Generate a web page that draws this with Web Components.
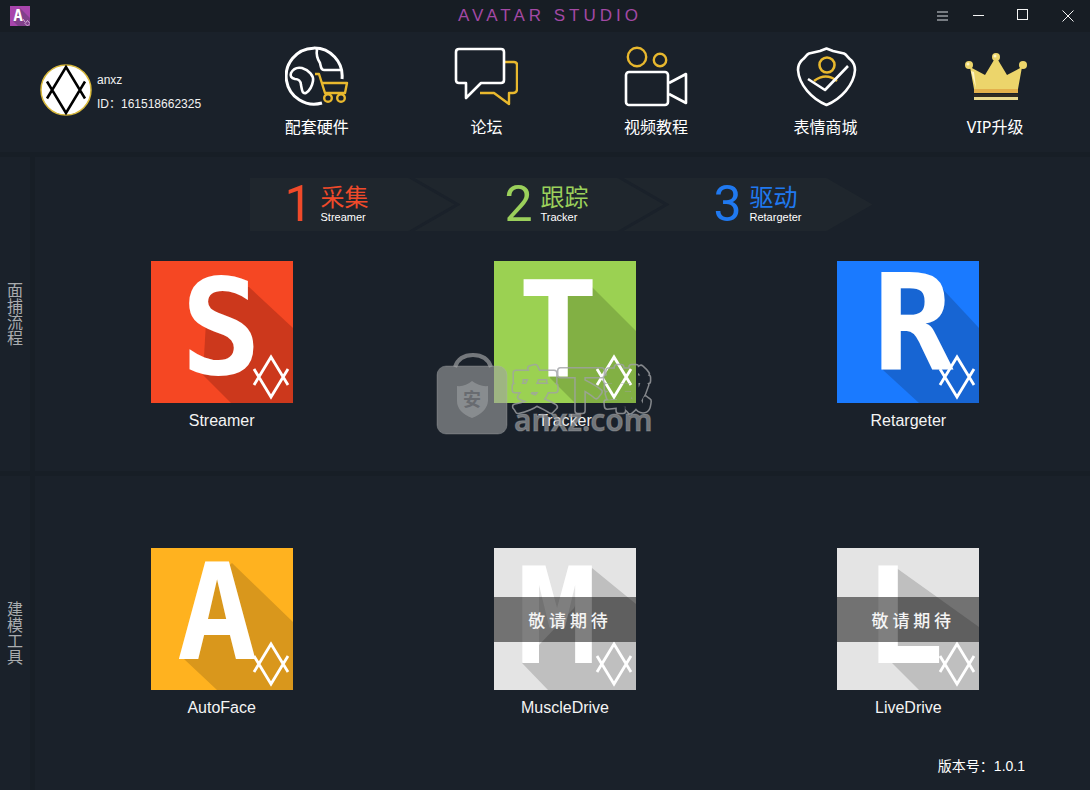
<!DOCTYPE html>
<html lang="zh-CN">
<head>
<meta charset="utf-8">
<meta name="viewport" content="width=device-width, initial-scale=1">
<title>AVATAR STUDIO</title>
<style>
  body {
    margin: 0;
    background: #171e26;
    color: #fff;
    font-family: "Liberation Sans", "Noto Sans CJK SC", sans-serif;
    font-size: 16px;
    line-height: 20px;
  }
</style>
</head>
<body>
<studio-app></studio-app>

<script>
  const define = (name, html, setup) => {
    const template = document.createElement('template');
    template.innerHTML = html;
    customElements.define(name, class extends HTMLElement {
      constructor() {
        super();
        this.attachShadow({ mode: 'open' }).append(template.content.cloneNode(true));
      }
      connectedCallback() {
        if (setup) setup(this, this.shadowRoot);
      }
    });
  };

  const EMBLEM = 'M-17 8 0-20 17 8M-17-8 0 20 17-8';

  /* ---------- title bar ---------- */
  define('title-bar', `
    <style>
      :host { display: grid; grid-template-columns: 1fr auto 1fr; align-items: center; height: 32px; padding-left: 10px; background: #171d24; }
      .logo { display: block; width: 20px; height: 20px; }
      h1 { margin: 0; font-size: 17px; font-weight: 400; line-height: 32px; letter-spacing: 4px; color: #a349a4; }
      .controls { display: flex; justify-content: flex-end; }
      button { display: grid; place-items: center; width: 45px; height: 32px; padding: 0; border: 0; background: none; color: #f4f4f4; }
      button.menu { width: 27px; color: #777c82; }
      button svg { display: block; width: 16px; height: 16px; fill: none; stroke: currentColor; }
    </style>
    <svg class="logo" viewBox="0 0 20 20" aria-hidden="true">
      <rect width="20" height="20" fill="#a845ac"/>
      <path d="M10 2 20 12V20H8L3 15Z" fill="#81408b"/>
      <text x="8" y="15" text-anchor="middle" font-family="DejaVu Sans Mono, monospace" font-weight="700" font-size="16" fill="#fff">A</text>
      <path d="M17.500 14.500 20 17.500 17.500 20 15 17.500ZM13 13l2 3" fill="none" stroke="#e6cce8" stroke-width=".8"/>
    </svg>
    <h1>AVATAR STUDIO</h1>
    <div class="controls">
      <button class="menu" aria-label="菜单"><svg viewBox="0 0 16 16"><path d="M3 4h11M3 8h11M3 12h11" stroke-width="2"/></svg></button>
      <button aria-label="最小化"><svg viewBox="0 0 16 16"><path d="M3 7.500h11"/></svg></button>
      <button aria-label="最大化"><svg viewBox="0 0 16 16"><rect x="2.500" y="1.500" width="10" height="10"/></svg></button>
      <button aria-label="关闭"><svg viewBox="0 0 16 16"><path d="M2.500 2.500l11 11M13.500 2.500l-11 11"/></svg></button>
    </div>
  `);

  /* ---------- user card ---------- */
  define('user-card', `
    <style>
      :host { display: flex; align-items: center; gap: 5px; font-size: 12px; line-height: 24px; color: #f2f2f2; }
      svg { display: block; width: 52px; height: 52px; flex: none; }
      .lines { padding-top: 4px; }
    </style>
    <svg viewBox="-26 -26 52 52" role="img" aria-label="头像">
      <circle r="25" fill="#fff" stroke="#d9b93c" stroke-width="1.500"/>
      <path d="M-19 8.500 0-23 19 8.500M-19-8.500 0 23 19-8.500" fill="none" stroke="#000" stroke-width="2.500"/>
    </svg>
    <div class="lines"><div><slot name="name"></slot></div><div><slot name="id"></slot></div></div>
  `);

  /* ---------- navigation entry ---------- */
  const ICONS = {
    hardware: `
      <path d="M57 34A28 28 0 1 0 37 58"/>
      <path stroke-width="2.600" d="M32 4C31 10 33 15 35 18 36 22 36 25 39 25H56"/>
      <path stroke-width="2.600" d="M6 28C8 24 12 22 17 23 24 25 29 31 28 36 27 42 24 46 21 48 17 49 17 45 16 40 16 36 13 34 10 34 6 33 5 31 6 28Z"/>
      <g stroke="#e8b82e" stroke-width="2.400"><path d="M30 29H34L40 48H60L62 38H37"/><circle cx="43" cy="53" r="3.800"/><circle cx="56" cy="53" r="3.800"/></g>`,
    forum: `
      <path stroke="#e8b82e" stroke-width="2.400" d="M51 17H60Q63 17 63 20V44Q63 48 59 48H55V59L40 48H26"/>
      <path stroke-width="2.600" d="M5 4H47Q50 4 50 7V35Q50 38 47 38H27L12 53V38H5Q2 38 2 35V7Q2 4 5 4Z"/>`,
    video: `
      <g stroke="#e8b82e" stroke-width="2.400"><circle cx="13" cy="12" r="9.200"/><circle cx="36" cy="15" r="6.200"/></g>
      <rect stroke-width="2.600" x="2" y="27" width="42" height="33" rx="3"/>
      <path stroke-width="2.600" d="M45 38 62 29V58L45 49"/>`,
    store: `
      <path stroke-width="2.600" d="M32.500 3.500 26 6 15 8.500C12 10 11 13 8 15 5 18 4 21 4 25 5 40 18 54 32.500 60 47 54 60 40 61 25 61 21 60 18 57 15 54 13 53 10 50 8.500L39 6Z"/>
      <g stroke="#e8b82e" stroke-width="2.600"><circle cx="33" cy="20" r="7.500"/><path d="M20 36Q32 27 43 36"/></g>
      <path stroke-width="2.600" d="M14 34 31 45 54 21"/>`,
    vip: `
      <g fill="#ecd56b" stroke="none">
        <circle cx="6" cy="20" r="4"/><circle cx="33" cy="12" r="4"/><circle cx="60" cy="20" r="4"/>
        <path d="M7 22 22 30 31 15H35L44 30 59 22 55 44H11Z"/>
        <path d="M11 44H55V48H11Z" fill="#e3b04c"/><path d="M11 49H55V52H11Z" fill="#302a22"/>
        <path d="M11 52H55V55H11Z" fill="#ead98f"/>
        <path d="M8 26 13 43 11 27Z" fill="#fff5c4"/><circle cx="5" cy="19" r="1.500" fill="#fff5c4"/><circle cx="32" cy="11" r="1.500" fill="#fff5c4"/>
      </g>`
  };
  define('nav-entry', `
    <style>
      :host { display: block; }
      a { display: flex; flex-direction: column; align-items: center; gap: 8px; color: #fff; text-decoration: none; font-family: "Noto Sans", "Noto Sans CJK SC", sans-serif; white-space: nowrap; }
      svg { display: block; width: 64px; height: 64px; fill: none; stroke: #fff; stroke-width: 3; stroke-linejoin: round; }
    </style>
    <a href="#"><svg viewBox="0 0 64 64" aria-hidden="true"></svg><span><slot></slot></span></a>
  `, (host, root) => { root.querySelector('svg').innerHTML = ICONS[host.getAttribute('icon')]; });

  /* ---------- process step ---------- */
  define('flow-step', `
    <style>
      :host { display: flex; align-items: center; gap: 10px; box-sizing: border-box; height: 53px; width: 249px; padding-left: 92px; margin-left: -40px; background: #1f262d;
        clip-path: polygon(0 0, calc(100% - 46px) 0, 100% 50%, calc(100% - 46px) 100%, 0 100%, 46px 50%); }
      :host([first]) { width: 205px; padding-left: 37px; margin-left: 0;
        clip-path: polygon(0 0, calc(100% - 46px) 0, 100% 50%, calc(100% - 46px) 100%, 0 100%); }
      .number { width: 24px; display: flex; justify-content: center; font-family: Roboto, sans-serif; font-size: 50px; line-height: 53px; color: var(--step); }
      .words { padding-bottom: 2px; }
      .title { font-family: "Noto Sans CJK SC", sans-serif; font-size: 24px; line-height: 26px; color: var(--step); }
      .caption { font-size: 11px; line-height: 16px; }
    </style>
    <div class="number"><slot name="number"></slot></div>
    <div class="words"><div class="title"><slot></slot></div><div class="caption"><slot name="caption"></slot></div></div>
  `);

  /* ---------- application tile ---------- */
  const TILES = {
    S: { color: '#f54723', shade: '#cc381c', x: 70, y: 113, shadow: '57,25 98,26 142,67 142,142 80,142 52,114' },
    T: { color: '#9bd152', shade: '#82b044', x: 64, y: 116, shadow: '71,33 91,19 142,70 142,142 81,142 56,117' },
    R: { color: '#1a7aff', shade: '#1765d3', x: 76, y: 109, shadow: '60,25 100,22 142,67 142,142 82,142 46,109' },
    A: { color: '#ffb21f', shade: '#d9971c', x: 66, y: 111, shadow: '66,28 81,15 142,74 142,142 66,142 33,111' },
    M: { color: '#e4e4e4', shade: '#bfbfbf', x: 63, y: 115, shadow: '80,60 98,20 142,56 142,142 54,142 28,115' },
    L: { color: '#e4e4e4', shade: '#bfbfbf', x: 67, y: 115, shadow: '58,19 142,79 142,142 82,142 46,106 58,98' }
  };
  define('app-tile', `
    <style>
      :host { display: block; }
      button { display: flex; flex-direction: column; align-items: center; gap: 8px; margin: 0 auto; padding: 0; border: 0; background: none; color: #f4f4f4; font: inherit; }
      .art { position: relative; display: block; }
      svg { display: block; width: 142px; height: 142px; }
      .soon { position: absolute; left: 0; right: 0; top: 49px; background: rgb(0 0 0 / .5); font-family: "Noto Sans CJK SC", sans-serif; font-size: 17px; font-weight: 500; line-height: 45px; white-space: nowrap; padding-left: 6px; }
    </style>
    <button>
      <span class="art"><svg viewBox="0 0 142 142" aria-hidden="true"></svg><span class="soon">敬 请 期 待</span></span>
      <span><slot></slot></span>
    </button>
  `, (host, root) => {
    const letter = host.getAttribute('letter');
    const t = TILES[letter];
    root.querySelector('svg').innerHTML = `
      <rect width="142" height="142" fill="${t.color}"/>
      <polygon points="${t.shadow}" fill="${t.shade}"/>
      <text x="${t.x}" y="${t.y}" text-anchor="middle" font-family="DejaVu Sans Mono, monospace" font-weight="700" font-size="134" fill="#fff">${letter}</text>
      <path transform="translate(120 116)" d="${EMBLEM}" fill="none" stroke="#fff" stroke-width="2.800"/>`;
    if (!host.hasAttribute('soon')) root.querySelector('.soon').remove();
  });

  /* ---------- site watermark ---------- */
  define('site-mark', `
    <style>
      :host { display: block; pointer-events: none; }
      svg { display: block; width: 220px; height: 84px; }
      text { font-family: "Noto Sans", "Noto Sans CJK SC", sans-serif; }
    </style>
    <svg viewBox="0 0 220 84">
      <mask id="hollow" maskUnits="userSpaceOnUse" x="0" y="0" width="220" height="84">
        <rect width="220" height="84" fill="#fff"/>
        <text x="76" y="54" font-size="46" font-weight="500" fill="#000" stroke="#000" stroke-width="4" stroke-linejoin="round">安下载</text>
      </mask>
      <path d="M19 15C22 6 29 3 37 3S52 6 55 15" fill="none" stroke="#85878b" stroke-width="4" opacity=".85"/>
      <rect x="1" y="14" width="70" height="68" rx="9" fill="#a0a1a4" stroke="#b4b5b7" fill-opacity=".6" stroke-opacity=".3"/>
      <path d="M36 29Q44 35 52 34V49Q51 60 36 66 21 60 21 49V34Q29 35 36 29Z" fill="#96989b" fill-opacity=".7"/>
      <text x="36" y="54" text-anchor="middle" font-size="18" font-weight="700" fill="#686b70">安</text>
      <text x="76" y="54" font-size="46" font-weight="500" fill="#a0a2a5" stroke="#a0a2a5" stroke-width="7" stroke-linejoin="round" mask="url(#hollow)" opacity=".8">安下载</text>
      <text x="78" y="79" font-size="30" font-weight="600" fill="#8f9195" fill-opacity=".75" stroke="#b4b5b7" stroke-opacity=".35" stroke-width="1">anxz.com</text>
    </svg>
  `);

  /* ---------- section with vertical rail label ---------- */
  define('studio-section', `
    <style>
      :host { display: grid; grid-template-columns: 30px 1fr; gap: 5px; }
      h2 { margin: 0; display: flex; align-items: center; justify-content: center; writing-mode: vertical-rl; background: #1a212a; color: #a9acaf; font-family: "Noto Sans CJK SC", sans-serif; font-size: 16px; font-weight: 400; line-height: 30px; }
      .body { background: #1a212a; padding: 0 10px 0 15px; display: grid; grid-template-rows: 1fr auto 1fr; }
      :host([steps]) .body { grid-template-rows: auto auto 1fr; gap: 30px; padding-top: 21px; }
      .tiles { grid-row: 2; display: grid; grid-template-columns: repeat(3, 1fr); }
      .top { display: flex; justify-content: center; }
      .bottom { align-self: end; justify-self: end; }
    </style>
    <h2><slot name="label"></slot></h2>
    <div class="body">
      <div class="top"><slot name="top"></slot></div>
      <div class="tiles"><slot></slot></div>
      <div class="bottom"><slot name="bottom"></slot></div>
    </div>
  `);

  /* ---------- whole window ---------- */
  define('studio-app', `
    <style>
      :host { display: grid; grid-template-rows: 152px 1fr 1fr; gap: 5px; min-height: 100vh; }
      header { background: #1a212a; }
      .bar { display: flex; height: 120px; padding-right: 10px; }
      user-card { width: 192px; padding-left: 40px; flex: none; height: 116px; }
      nav { flex: 1; display: grid; grid-template-columns: repeat(5, 1fr); padding-top: 13px; }
      .steps { display: flex; margin-right: 8px; }
      .marked { position: relative; }
      site-mark { position: absolute; left: calc(50% - 129px); top: 91px; }
      .version { margin: 0 55px 14px 0; font-size: 14px; }
    </style>
    <header>
      <title-bar></title-bar>
      <div class="bar">
        <user-card><span slot="name">anxz</span><span slot="id">ID：161518662325</span></user-card>
        <nav>
          <nav-entry icon="hardware">配套硬件</nav-entry>
          <nav-entry icon="forum">论坛</nav-entry>
          <nav-entry icon="video">视频教程</nav-entry>
          <nav-entry icon="store">表情商城</nav-entry>
          <nav-entry icon="vip">VIP升级</nav-entry>
        </nav>
      </div>
    </header>
    <studio-section steps>
      <span slot="label">面捕流程</span>
      <div slot="top" class="steps">
        <flow-step first style="--step:#f04a2a"><span slot="number">1</span>采集<span slot="caption">Streamer</span></flow-step>
        <flow-step style="--step:#9bd05b"><span slot="number">2</span>跟踪<span slot="caption">Tracker</span></flow-step>
        <flow-step style="--step:#2079f0"><span slot="number">3</span>驱动<span slot="caption">Retargeter</span></flow-step>
      </div>
      <app-tile letter="S">Streamer</app-tile>
      <div class="marked">
        <app-tile letter="T">Tracker</app-tile>
        <site-mark></site-mark>
      </div>
      <app-tile letter="R">Retargeter</app-tile>
    </studio-section>
    <studio-section>
      <span slot="label">建模工具</span>
      <app-tile letter="A">AutoFace</app-tile>
      <app-tile letter="M" soon>MuscleDrive</app-tile>
      <app-tile letter="L" soon>LiveDrive</app-tile>
      <p slot="bottom" class="version">版本号：1.0.1</p>
    </studio-section>
  `);
</script>
</body>
</html>
